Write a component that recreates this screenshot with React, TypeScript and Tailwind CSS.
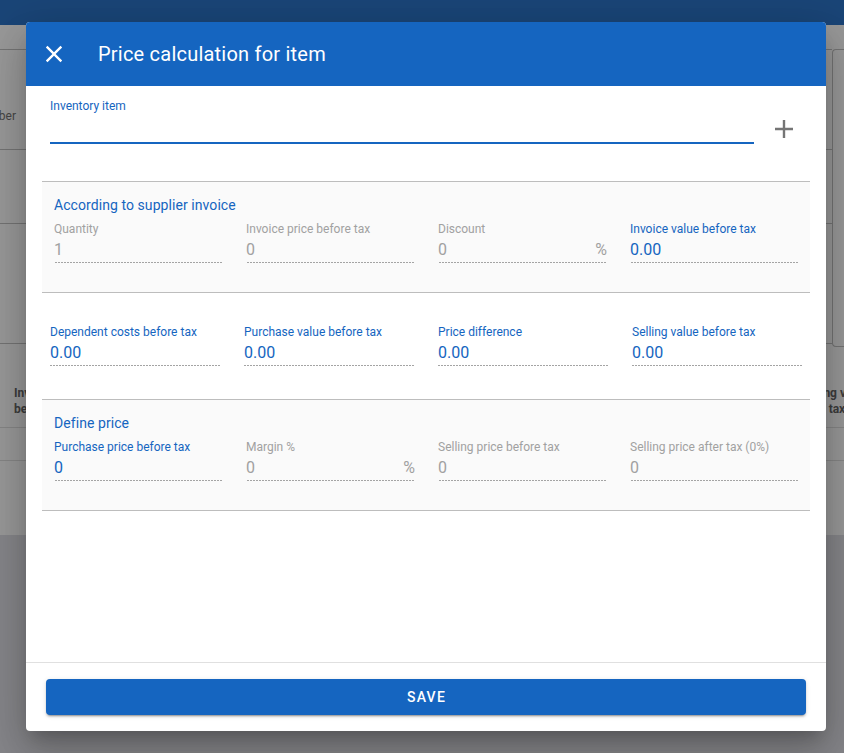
type Field = { label: string; value: string; active?: boolean; suffix?: string }

const INVOICE_FIELDS: Field[] = [
  { label: 'Quantity', value: '1' },
  { label: 'Invoice price before tax', value: '0' },
  { label: 'Discount', value: '0', suffix: '%' },
  { label: 'Invoice value before tax', value: '0.00', active: true },
]

const COST_FIELDS: Field[] = [
  { label: 'Dependent costs before tax', value: '0.00', active: true },
  { label: 'Purchase value before tax', value: '0.00', active: true },
  { label: 'Price difference', value: '0.00', active: true },
  { label: 'Selling value before tax', value: '0.00', active: true },
]

const PRICE_FIELDS: Field[] = [
  { label: 'Purchase price before tax', value: '0', active: true },
  { label: 'Margin %', value: '0', suffix: '%' },
  { label: 'Selling price before tax', value: '0' },
  { label: 'Selling price after tax (0%)', value: '0' },
]

function PriceField({ field, inset }: { field: Field; inset?: boolean }) {
  const color = field.active ? 'text-[#1565c0]' : 'text-[#a1a1a1]'
  return (
    <div className="min-w-0">
      <div className={`text-xs leading-4 whitespace-nowrap ${color}`}>{field.label}</div>
      <div className={`flex h-[25px] items-start justify-between ${color}`}>
        <span className="text-base leading-[26px]">{field.value}</span>
        {field.suffix && <span className="text-base leading-[25px] tracking-[-1px]">{field.suffix}</span>}
      </div>
      {/* Read-only underline */}
      <div className={`h-px bg-[repeating-linear-gradient(to_right,#a4a4a4_0,#a4a4a4_2px,transparent_2px,transparent_3px)] ${inset ? 'ml-px' : ''}`} />
    </div>
  )
}

function BackgroundPage() {
  return (
    <div className="flex h-full flex-col overflow-hidden bg-white font-['Roboto',sans-serif]">
      <div className="h-[25px] shrink-0 bg-[#1565c0]" />
      <div className="flex h-[321px] shrink-0">
        <div className="flex-1">
          <div className="h-[25px] border-b border-[#bbb]" />
          <div className="flex h-[100px] items-center border-b border-[#bbb] pt-[32px]">
            <div className="flex w-[16px] justify-end whitespace-nowrap text-xs text-[#666]">Invoice number</div>
          </div>
          <div className="h-[74px] border-b border-[#bbb]" />
          <div className="h-[120px] border-b border-[#bbb]" />
        </div>
        <div className="mt-[24px] h-[298px] w-[12px] rounded-l border border-r-0 border-[#bbb]" />
      </div>
      <div className="flex h-[82px] shrink-0 items-end border-b border-[#ddd] pb-[10px] pl-[14px] text-xs font-bold leading-4 text-[#555]">
        <div className="whitespace-nowrap">Invoice price<br />before tax</div>
        <div className="ml-auto w-[44px] whitespace-nowrap">Selling value<br />after tax</div>
      </div>
      <div className="h-[33px] shrink-0 border-b border-[#ddd]" />
      <div className="h-[74px] shrink-0" />
      <div className="flex-1 bg-[#dcdde4]" />
    </div>
  )
}

export default function App() {
  return (
    <div className="relative h-screen overflow-hidden font-['Roboto',sans-serif]">
      <BackgroundPage />
      <div className="absolute inset-0 bg-[#212121]/46" />

      {/* Dialog */}
      <div className="absolute left-[26px] top-[22px] flex h-[709px] w-[800px] flex-col overflow-hidden rounded bg-white shadow-[0_11px_15px_-7px_rgba(0,0,0,0.2),0_24px_38px_3px_rgba(0,0,0,0.14),0_9px_46px_8px_rgba(0,0,0,0.12)]">
        <div className="flex h-16 shrink-0 items-center bg-[#1565c0] text-white">
          <svg viewBox="0 0 24 24" className="ml-[14px] h-[28px] w-[28px]" fill="currentColor">
            <path d="M19 6.41L17.59 5 12 10.59 6.41 5 5 6.41 10.59 12 5 17.59 6.41 19 12 13.41 17.59 19 19 17.59 13.41 12z" />
          </svg>
          <h1 className="ml-[30px] text-xl font-normal tracking-[0.22px]">Price calculation for item</h1>
        </div>

        <div className="flex h-[95px] shrink-0 px-6 pt-[12px]">
          <div className="w-[704px]">
            <div className="text-xs leading-4 text-[#1565c0]">Inventory item</div>
            <div className="h-[30px] border-b-2 border-[#1565c0]" />
          </div>
          <svg viewBox="0 0 18 18" className="ml-[21px] mt-[22px] h-[18px] w-[18px]" fill="#757575">
            <path d="M7.8 0h2.4v7.8H18v2.4h-7.8V18H7.8v-7.8H0V7.8h7.8z" />
          </svg>
        </div>

        <div className="mx-4 h-[112px] shrink-0 border-y border-[#bdbdbd] bg-[#fafafa] px-3 pt-[13px]">
          <div className="text-sm leading-5 tracking-[0.07px] text-[#1565c0]">According to supplier invoice</div>
          <div className="mt-[6px] grid grid-cols-4 gap-6">
            {INVOICE_FIELDS.map((f) => <PriceField key={f.label} field={f} inset />)}
          </div>
        </div>

        <div className="mx-4 h-[106px] shrink-0 px-2 pt-[31px]">
          <div className="grid grid-cols-4 gap-6">
            {COST_FIELDS.map((f) => <PriceField key={f.label} field={f} />)}
          </div>
        </div>

        <div className="mx-4 h-[112px] shrink-0 border-y border-[#bdbdbd] bg-[#fafafa] px-3 pt-[13px]">
          <div className="text-sm leading-5 tracking-[0.07px] text-[#1565c0]">Define price</div>
          <div className="mt-[6px] grid grid-cols-4 gap-6">
            {PRICE_FIELDS.map((f) => <PriceField key={f.label} field={f} inset />)}
          </div>
        </div>

        <div className="mt-auto border-t border-[#e0e0e0] px-5 pb-4 pt-4">
          <button className="h-9 w-full rounded bg-[#1565c0] pl-px text-sm font-medium uppercase tracking-[1.25px] text-white shadow-[0_3px_1px_-2px_rgba(0,0,0,0.2),0_2px_2px_0_rgba(0,0,0,0.14),0_1px_5px_0_rgba(0,0,0,0.12)]">
            Save
          </button>
        </div>
      </div>
    </div>
  )
}
